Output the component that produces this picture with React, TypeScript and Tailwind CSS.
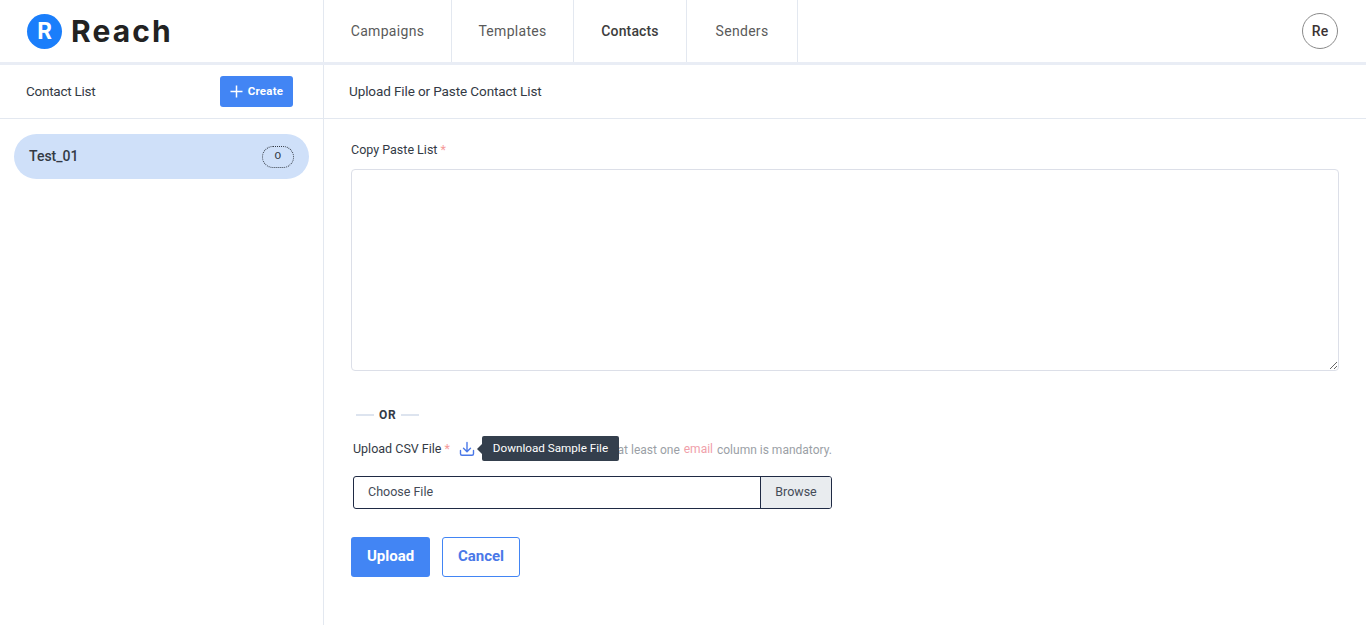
import React from "react";

const NavItem = ({ label, width, active }: { label: string; width: string; active?: boolean }) => (
  <div className={`flex h-full items-center justify-center border-r border-[#e3e8f0] text-[14px] ${width} ${active ? "font-medium tracking-[0.15px] text-[#3d3d3d]" : "tracking-[0.3px] text-[#5a5a5a]"}`}>
    {label}
  </div>
);

export default function App() {
  return (
    <div className="flex h-[625px] w-full flex-col overflow-hidden bg-white font-['Roboto',sans-serif] text-[#2f3542]">
      <header className="flex h-[65px] shrink-0 items-stretch border-b-[3px] border-[#e9edf5]">
        <div className="flex w-[324px] shrink-0 items-center gap-[9px] border-r border-[#e3e8f0] pl-[27px]">
          <div className="flex h-[35px] w-[35px] items-center justify-center rounded-full bg-[#1a7efb] text-[23px] font-bold leading-none text-white">R</div>
          <span className="font-['Inter',sans-serif] text-[30px] font-bold leading-none tracking-[2.1px] text-[#222222]">Reach</span>
        </div>
        <nav className="flex items-center">
          <NavItem label="Campaigns" width="w-[128px]" />
          <NavItem label="Templates" width="w-[122px]" />
          <NavItem label="Contacts" width="w-[113px]" active />
          <NavItem label="Senders" width="w-[111px]" />
        </nav>
        <div className="ml-auto flex items-center pr-[28px]">
          <div className="flex h-[36px] w-[36px] items-center justify-center rounded-full border border-[#8a8a8a] text-[14px] font-medium text-[#3b3333]">Re</div>
        </div>
      </header>

      <div className="flex min-h-0 flex-1">
        <aside className="w-[324px] shrink-0 border-r border-[#e3e8f0]">
          <div className="flex h-[54px] items-center justify-between border-b border-[#e3e8f0] pl-[26px] pr-[30px]">
            <span className="text-[13.5px] tracking-[-0.25px] text-[#333a45]">Contact List</span>
            <button className="flex h-[31px] w-[73px] items-center justify-center gap-[5px] rounded-[3px] bg-[#4285f4] text-[11.5px] font-bold tracking-[0.2px] text-white">
              <svg width="13" height="13" viewBox="0 0 13 13" fill="none" stroke="currentColor" strokeWidth="1.5"><path d="M6.5 0.5v12M0.5 6.5h12" /></svg>
              Create
            </button>
          </div>
          <div className="px-[14px] pt-[15px]">
            <div className="flex h-[45px] items-center justify-between rounded-full bg-[#cfe0f9] pl-[15px] pr-[15px]">
              <span className="pb-[2px] text-[14px] font-medium leading-none text-[#333a45]">Test_01</span>
              <span className="flex h-[22px] w-[32px] items-center justify-center rounded-full border border-dotted border-[#333a45] font-['DejaVu_Sans',sans-serif] text-[9px] text-[#333a45]">
                <span className="inline-block scale-x-125">0</span>
              </span>
            </div>
          </div>
        </aside>

        <main className="min-w-0 flex-1">
          <div className="flex h-[54px] items-center border-b border-[#e3e8f0] pl-[25px] text-[13.5px] tracking-[-0.1px] text-[#333a45]">
            Upload File or Paste Contact List
          </div>
          <div className="pl-[27px] pr-[27px] pt-[23px]">
            <label className="block text-[12.5px] leading-[16px] text-[#333a45]">
              Copy Paste List <span className="text-[#f59a9a]">*</span>
            </label>
            <textarea className="mt-[11px] block h-[202px] w-full rounded-[4px] border border-[#dcdfe8] outline-none" />

            <div className="ml-[5px] mt-[36px] flex h-[16px] items-center">
              <span className="h-[2px] w-[18px] bg-[#dde4ef]" />
              <span className="ml-[5px] text-[12px] font-bold tracking-[0.8px] text-[#333a45]">OR</span>
              <span className="ml-[4px] h-[2px] w-[18px] bg-[#dde4ef]" />
            </div>

            <div className="relative ml-[2px] mt-[16px] flex h-[20px] items-center">
              <span className="text-[12.5px] text-[#333a45]">Upload CSV File <span className="text-[#f59a9a]">*</span></span>
              <svg className="ml-[9px]" width="16" height="16" viewBox="0 0 16 16" fill="none" stroke="#4a78e8" strokeWidth="1.4" strokeLinecap="round" strokeLinejoin="round">
                <path d="M8 1.5v9M4.5 7.2 8 10.7l3.5-3.5" />
                <path d="M1.5 9.5v3.2c0 .9.6 1.5 1.5 1.5h10c.9 0 1.5-.6 1.5-1.5V9.5" />
              </svg>
              <span className="ml-[8px] translate-y-[1px] whitespace-nowrap text-[12px] text-[#9b9fa6]">
                The CSV file should have at least one{" "}
                <span className="mx-[1px] inline-block -translate-y-[1px] text-[#f0a0aa]">email</span>{" "}
                column is mandatory.
              </span>
              <div className="absolute left-[129px] top-[-3px] flex h-[25px] w-[137px] items-center justify-center rounded-[2px] bg-[#343f4d] text-[11.7px] text-white">
                <span className="absolute left-[-5px] top-[8px] h-0 w-0 border-y-[5px] border-r-[5px] border-y-transparent border-r-[#343f4d]" />
                Download Sample File
              </div>
            </div>

            <div className="ml-[2px] mt-[17px] flex h-[33px] w-[479px] overflow-hidden rounded-[3px] border border-[#1f2a44] text-[12.5px] text-[#444b57]">
              <div className="flex flex-1 items-center pl-[14px]">Choose File</div>
              <div className="flex w-[71px] items-center justify-center border-l border-[#1f2a44] bg-[#e9ecef]">Browse</div>
            </div>

            <div className="mt-[28px] flex gap-[12px]">
              <button className="h-[40px] w-[79px] rounded-[3px] bg-[#4285f4] pb-[2px] text-[15px] font-bold leading-none text-white">Upload</button>
              <button className="h-[40px] w-[78px] rounded-[3px] border border-[#4285f4] bg-white pb-[2px] text-[15px] font-bold leading-none text-[#4a78e8]">Cancel</button>
            </div>
          </div>
        </main>
      </div>
    </div>
  );
}
